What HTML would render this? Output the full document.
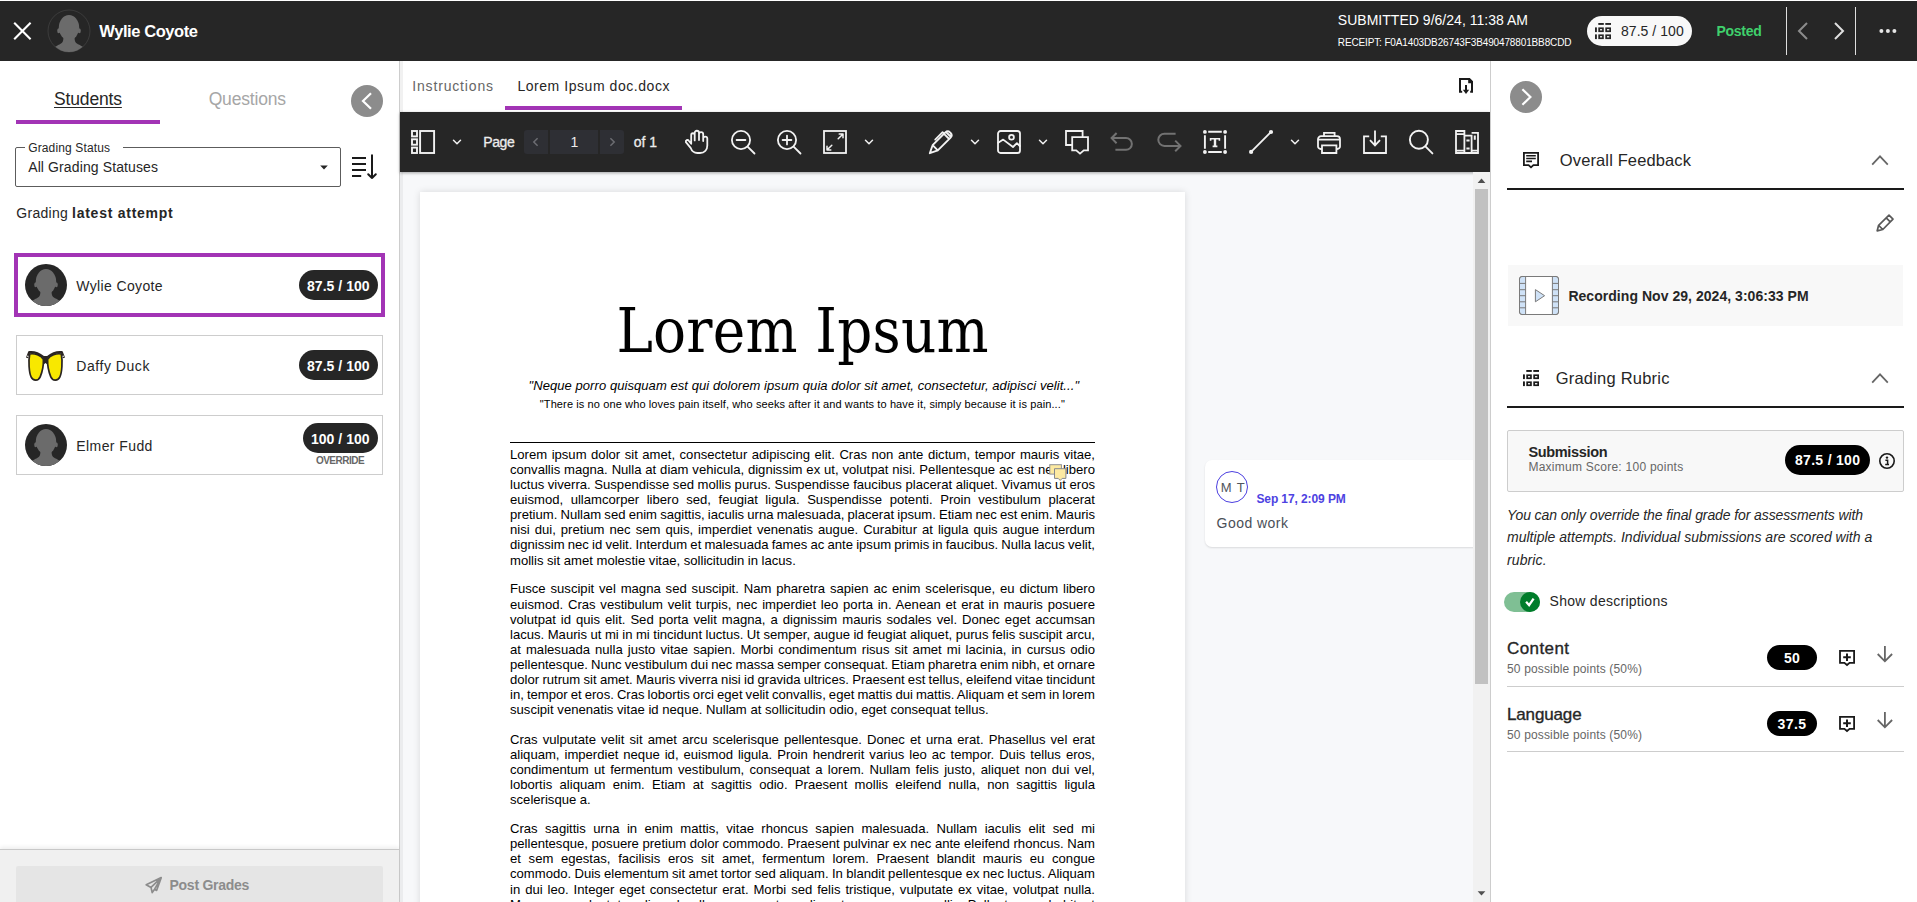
<!DOCTYPE html>
<html lang="en"><head><meta charset="utf-8"><title>Grading - Lorem Ipsum doc.docx</title>
<style>
html,body{margin:0;padding:0;}
body{width:1917px;height:902px;overflow:hidden;position:relative;background:#fff;font-family:"Liberation Sans","DejaVu Sans",sans-serif;}
.t{position:absolute;white-space:nowrap;margin:0;padding:0;}
h1.t{font-weight:400;}
svg{overflow:visible;display:block;}
.para{margin:0;padding:0;}
</style></head>
<body>
<svg width="0" height="0" style="position:absolute"><defs><symbol id="sil" viewBox="0 0 42 42"><clipPath id="silc"><circle cx="21" cy="21" r="21"/></clipPath><g clip-path="url(#silc)"><ellipse cx="21" cy="17.6" rx="10.2" ry="12.6"/><ellipse cx="10.7" cy="20.8" rx="1.5" ry="2.5"/><ellipse cx="31.3" cy="20.8" rx="1.5" ry="2.5"/>
<path d="M15.4 27 L26.6 27 C26.6 31 27 32.6 30 34.2 C33.4 35.8 37 37.4 39 42 L3 42 C5 37.4 8.6 35.8 12 34.2 C15 32.6 15.4 31 15.4 27 Z"/></g></symbol></defs></svg>
<aside id="students">
<div style="position:absolute;left:0px;top:61px;width:399px;height:841px;background:#fff;border-right:1px solid #cdcdcd;"></div>
<span class="t" id="t0" style="left:54.0px;top:90.8px;font:normal 400 17.5px/1 'Liberation Sans', 'DejaVu Sans', sans-serif;color:#262626;letter-spacing:-0.154px;text-decoration:underline;text-decoration-thickness:1px;text-underline-offset:2px;">Students</span>
<div style="position:absolute;left:16px;top:120px;width:144px;height:4px;background:#a234b5;"></div>
<span class="t" id="t1" style="left:208.7px;top:90.8px;font:normal 400 17.5px/1 'Liberation Sans', 'DejaVu Sans', sans-serif;color:#a6a6a6;letter-spacing:-0.187px;">Questions</span>
<svg style="position:absolute;left:351px;top:85px;" width="32" height="32" viewBox="0 0 32 32" fill="none"><circle cx="16" cy="16" r="16" fill="#8c8c8c"/>
<path d="M20 8.2 L12 16 L20 23.8" stroke="#fff" stroke-width="2.2"/></svg>
<div style="position:absolute;left:15px;top:147px;width:326px;height:40px;background:#fff;border:1px solid #5c5c5c;border-radius:2px;box-sizing:border-box;"></div>
<div style="position:absolute;left:25px;top:145px;width:98px;height:5px;background:#fff;"></div>
<span class="t" id="t2" style="left:28.2px;top:141.7px;font:normal 400 12px/1 'Liberation Sans', 'DejaVu Sans', sans-serif;color:#262626;letter-spacing:0.135px;">Grading Status</span>
<span class="t" id="t3" style="left:28.2px;top:159.8px;font:normal 400 14px/1 'Liberation Sans', 'DejaVu Sans', sans-serif;color:#262626;letter-spacing:0.114px;">All Grading Statuses</span>
<svg style="position:absolute;left:319px;top:164px;" width="10" height="7" viewBox="0 0 10 7" fill="none">
<path d="M1.2 1.4 L8.8 1.4 L5 5.6 Z" fill="#262626"/></svg>
<svg style="position:absolute;left:350px;top:154px;" width="28" height="27" viewBox="0 0 28 27" fill="none">
<path d="M2 4 H16 M2 10 H16 M2 16 H16 M2 22 H11.2" stroke="#1a1a1a" stroke-width="2"/>
<path d="M22 1.2 V24 M18.2 20.2 L22 24 L25.8 20.2" stroke="#1a1a1a" stroke-width="2" stroke-linecap="round" stroke-linejoin="round"/></svg>
<span class="t" id="t4" style="left:16.3px;top:205.7px;font:normal 400 14px/1 'Liberation Sans', 'DejaVu Sans', sans-serif;color:#262626;letter-spacing:0.281px;">Grading</span>
<span class="t" id="t5" style="left:72.0px;top:205.7px;font:normal 700 14px/1 'Liberation Sans', 'DejaVu Sans', sans-serif;color:#262626;letter-spacing:0.751px;">latest attempt</span>
<div style="position:absolute;left:14px;top:253px;width:371px;height:64px;background:#fff;border:4px solid #a234b5;box-sizing:border-box;"></div>
<div style="position:absolute;left:16px;top:335px;width:367px;height:60px;background:#fff;border:1px solid #cdcdcd;box-sizing:border-box;"></div>
<div style="position:absolute;left:16px;top:415px;width:367px;height:60px;background:#fff;border:1px solid #cdcdcd;box-sizing:border-box;"></div>
<svg style="position:absolute;left:25px;top:264px;" width="42" height="42" viewBox="0 0 42 42" fill="none"><circle cx="21" cy="21" r="21" fill="#262626"/><use href="#sil" width="42" height="42" fill="#6b6b6b"/></svg>
<svg style="position:absolute;left:25px;top:424px;" width="42" height="42" viewBox="0 0 42 42" fill="none"><circle cx="21" cy="21" r="21" fill="#262626"/><use href="#sil" width="42" height="42" fill="#6b6b6b"/></svg>
<svg style="position:absolute;left:26.3px;top:351px;" width="39" height="31" viewBox="0 0 39 31" fill="none">
<path d="M17 5.6 H22 L21.4 13.4 L19.5 12 L17.6 13.4 Z" fill="#2a2522"/>
<path d="M3.7 3 C8.5 2 15 4.4 17.4 8.2 C17.6 14 16.2 21 14.2 25.8 C12.4 30 7.2 30.2 5.2 26.2 C3 21.6 2.3 10 3.7 3 Z" fill="#f8e800" stroke="#2a2522" stroke-width="1.7"/>
<path d="M3.7 3 C8.5 2 15 4.4 17.4 8.2 C17.6 14 16.2 21 14.2 25.8 C12.4 30 7.2 30.2 5.2 26.2 C3 21.6 2.3 10 3.7 3 Z" fill="#f8e800" stroke="#2a2522" stroke-width="1.7" transform="translate(39 0) scale(-1 1)"/>
<path d="M1 6.8 L3.2 1.2 C9 0.4 14.4 3.6 17.6 6.2 H21.4 C24.6 3.6 30 0.4 35.8 1.2 L38 6.8" stroke="#2a2522" stroke-width="2.2" fill="none" stroke-linejoin="round"/><circle cx="1.8" cy="5.2" r="0.8" fill="#e6e6e6"/><circle cx="37.2" cy="5.2" r="0.8" fill="#e6e6e6"/></svg>
<span class="t" id="t6" style="left:76.3px;top:279.1px;font:normal 400 14px/1 'Liberation Sans', 'DejaVu Sans', sans-serif;color:#262626;letter-spacing:0.358px;">Wylie Coyote</span>
<span class="t" id="t7" style="left:76.3px;top:359.1px;font:normal 400 14px/1 'Liberation Sans', 'DejaVu Sans', sans-serif;color:#262626;letter-spacing:0.542px;">Daffy Duck</span>
<span class="t" id="t8" style="left:76.3px;top:439.1px;font:normal 400 14px/1 'Liberation Sans', 'DejaVu Sans', sans-serif;color:#262626;letter-spacing:0.416px;">Elmer Fudd</span>
<div style="position:absolute;left:299px;top:270px;width:79px;height:30px;background:#262626;border-radius:15.0px;"></div>
<span class="t" id="t9" style="left:307.0px;top:278.5px;font:normal 700 14px/1 'Liberation Sans', 'DejaVu Sans', sans-serif;color:#fff;letter-spacing:0.035px;">87.5 / 100</span>
<div style="position:absolute;left:299px;top:350px;width:79px;height:30px;background:#262626;border-radius:15.0px;"></div>
<span class="t" id="t10" style="left:307.0px;top:358.5px;font:normal 700 14px/1 'Liberation Sans', 'DejaVu Sans', sans-serif;color:#fff;letter-spacing:0.035px;">87.5 / 100</span>
<div style="position:absolute;left:303px;top:423px;width:75px;height:30px;background:#262626;border-radius:15.0px;"></div>
<span class="t" id="t11" style="left:311.0px;top:431.5px;font:normal 700 14px/1 'Liberation Sans', 'DejaVu Sans', sans-serif;color:#fff;letter-spacing:0.026px;">100 / 100</span>
<span class="t" id="t12" style="left:315.9px;top:455.7px;font:normal 700 10px/1 'Liberation Sans', 'DejaVu Sans', sans-serif;color:#666;letter-spacing:-0.491px;">OVERRIDE</span>
<div style="position:absolute;left:0px;top:849px;width:399px;height:53px;background:#f0f0f0;border-top:1px solid #c8c8c8;box-sizing:border-box;box-shadow:0 -2px 4px rgba(0,0,0,.07);"></div>
<div style="position:absolute;left:16px;top:866px;width:367px;height:40px;background:#e5e5e5;border-radius:2px;"></div>
<svg style="position:absolute;left:144px;top:875px;" width="20" height="20" viewBox="0 0 20 20" fill="none">
<path d="M17.2 2.6 L2.2 9.8 L7 12.4 L8.2 17.6 L10.6 14.2 L12.6 15.4 Z M17.2 2.6 L7 12.4 M17.2 2.6 L10.6 14.2" stroke="#8c8c8c" stroke-width="1.7" stroke-linejoin="round"/></svg>
<span class="t" id="t13" style="left:169.5px;top:878.1px;font:normal 700 14px/1 'Liberation Sans', 'DejaVu Sans', sans-serif;color:#8c8c8c;letter-spacing:-0.258px;">Post Grades</span></aside>
<main id="viewer">
<div style="position:absolute;left:400px;top:61px;width:1090px;height:51px;background:#fff;"></div>
<div style="position:absolute;left:400px;top:61px;width:3px;height:51px;background:#f1f1f1;"></div>
<span class="t" id="t14" style="left:412.2px;top:79.1px;font:normal 400 14px/1 'Liberation Sans', 'DejaVu Sans', sans-serif;color:#666;letter-spacing:0.846px;">Instructions</span>
<span class="t" id="t15" style="left:517.4px;top:79.1px;font:normal 400 14px/1 'Liberation Sans', 'DejaVu Sans', sans-serif;color:#262626;letter-spacing:0.551px;">Lorem Ipsum doc.docx</span>
<div style="position:absolute;left:505px;top:106px;width:177px;height:4px;background:#a234b5;"></div>
<svg style="position:absolute;left:1456px;top:75px;" width="20" height="22" viewBox="0 0 20 22" fill="none">
<path d="M6.2 16.8 H4 V4 H13.4 L16 6.6 V16.8 H14.2" stroke="#1a1a1a" stroke-width="2" stroke-linejoin="miter"/>
<path d="M12.2 3.4 H13.6 L16.6 6.4 V8.2 H12.2 Z" fill="#1a1a1a"/>
<path d="M10 10 V16" stroke="#1a1a1a" stroke-width="2"/>
<path d="M6.8 14.8 H13.2 L10 19 Z" fill="#1a1a1a"/></svg>
<div style="position:absolute;left:400px;top:172px;width:1073px;height:730px;background:#f7f8fa;"></div>
<div style="position:absolute;left:400px;top:172px;width:3px;height:730px;background:#ebecee;"></div>
<div style="position:absolute;left:420px;top:192px;width:765px;height:720px;background:#fff;box-shadow:0 0 7px rgba(0,0,0,.13);"></div>
<div style="position:absolute;left:400px;top:112px;width:1090px;height:60px;background:#262626;box-shadow:0 1px 3px rgba(0,0,0,.35);"></div>
<svg style="position:absolute;left:411px;top:130px;" width="24" height="24" viewBox="0 0 24 24" fill="none"><g stroke="#f2f2f2" stroke-width="1.9"><rect x="1" y="1" width="5" height="5.4"/><rect x="1" y="9.3" width="5" height="5.4"/><rect x="1" y="17.6" width="5" height="5.4"/><rect x="9.1" y="1" width="14" height="22"/></g></svg>
<svg style="position:absolute;left:451.2px;top:137.2px;" width="12" height="10" viewBox="0 0 12 10" fill="none">
<path d="M2.5 3.3 L6 6.8 L9.5 3.3" stroke="#f2f2f2" stroke-width="1.5" stroke-linecap="round" stroke-linejoin="round"/></svg>
<span class="t" id="t16" style="left:483.3px;top:134.6px;font:normal 400 14px/1 'Liberation Sans', 'DejaVu Sans', sans-serif;color:#ececec;letter-spacing:-0.434px;-webkit-text-stroke:0.3px #ececec;">Page</span>
<div style="position:absolute;left:524px;top:130px;width:24px;height:24px;background:#2e2f34;border-radius:3px 0 0 3px;"></div>
<div style="position:absolute;left:549.6px;top:130px;width:48.4px;height:24px;background:#2e2f34;"></div>
<div style="position:absolute;left:600px;top:130px;width:24px;height:24px;background:#2e2f34;border-radius:0 3px 3px 0;"></div>
<svg style="position:absolute;left:530px;top:136px;" width="12" height="12" viewBox="0 0 12 12" fill="none">
<path d="M7.6 2.2 L3.8 6 L7.6 9.8" stroke="#6c6d72" stroke-width="1.5"/></svg>
<svg style="position:absolute;left:606px;top:136px;" width="12" height="12" viewBox="0 0 12 12" fill="none">
<path d="M4.4 2.2 L8.2 6 L4.4 9.8" stroke="#6c6d72" stroke-width="1.5"/></svg>
<span class="t" id="t17" style="left:570.6px;top:134.6px;font:normal 400 14px/1 'Liberation Sans', 'DejaVu Sans', sans-serif;color:#ececec;letter-spacing:-1.397px;">1</span>
<span class="t" id="t18" style="left:633.8px;top:134.6px;font:normal 400 14px/1 'Liberation Sans', 'DejaVu Sans', sans-serif;color:#ececec;letter-spacing:-0.053px;-webkit-text-stroke:0.3px #ececec;">of 1</span>
<svg style="position:absolute;left:685px;top:130px;" width="24" height="24" viewBox="0 0 24 24" fill="none"><g stroke="#f2f2f2" stroke-width="1.8" stroke-linecap="round" stroke-linejoin="round">
<path d="M6.2 13.4 V5 a1.75 1.75 0 0 1 3.5 0 V10.4 M9.7 10 V2.9 a2.15 2.15 0 0 1 4.3 0 V10 M14 10 V4.2 a2.1 2.1 0 0 1 4.2 0 V11 M18.2 11 V8.6 a2.05 2.05 0 0 1 4.1 0 V15.5 c0 4.6 -2.8 7.5 -7.3 7.5 h-2.6 c-3.6 0 -5.6 -1.8 -6.8 -5.2 L0.9 12.2 c-.6 -1.9 1.8 -3 2.9 -1.5 L6.2 13.8"/></g></svg>
<svg style="position:absolute;left:731px;top:130px;" width="24" height="24" viewBox="0 0 24 24" fill="none"><g stroke="#f2f2f2" stroke-width="1.8" stroke-linecap="round" stroke-linejoin="round"><circle cx="10" cy="10" r="9.1"/>
<path d="M16.6 16.6 L23.5 23.5 M5.6 10 H14.4"/></g></svg>
<svg style="position:absolute;left:777px;top:130px;" width="24" height="24" viewBox="0 0 24 24" fill="none"><g stroke="#f2f2f2" stroke-width="1.8" stroke-linecap="round" stroke-linejoin="round"><circle cx="10" cy="10" r="9.1"/>
<path d="M16.6 16.6 L23.5 23.5 M5.6 10 H14.4 M10 5.6 V14.4"/></g></svg>
<svg style="position:absolute;left:823px;top:130px;" width="24" height="24" viewBox="0 0 24 24" fill="none"><g stroke="#f2f2f2" stroke-width="1.8" stroke-linecap="round" stroke-linejoin="round"><rect x="1" y="1" width="22" height="22" stroke-linejoin="miter"/>
<path d="M15.2 8.8 L19.8 4.2 M16.2 4 H20 V7.8 M8.8 15.2 L4.2 19.8 M4 16.2 V20 H7.8" stroke-width="1.5"/></g></svg>
<svg style="position:absolute;left:863px;top:137.2px;" width="12" height="10" viewBox="0 0 12 10" fill="none">
<path d="M2.5 3.3 L6 6.8 L9.5 3.3" stroke="#f2f2f2" stroke-width="1.5" stroke-linecap="round" stroke-linejoin="round"/></svg>
<svg style="position:absolute;left:929px;top:130px;" width="24" height="24" viewBox="0 0 24 24" fill="none"><g stroke="#f2f2f2" stroke-width="1.8" stroke-linecap="round" stroke-linejoin="round">
<path d="M0.8 23.2 L3.6 15.2 L8.8 20.4 Z M3.6 15.2 L16.4 2.4 a3.3 3.3 0 0 1 4.6 0 L21.6 3 a3.3 3.3 0 0 1 0 4.6 L8.8 20.4 M15 3.8 L20.2 9 M17 2 L22 7" stroke-width="1.9"/>
<path d="M6.2 9.6 L13.6 2.2 L15.2 3.6" stroke-width="1.8"/></g></svg>
<svg style="position:absolute;left:969px;top:137.2px;" width="12" height="10" viewBox="0 0 12 10" fill="none">
<path d="M2.5 3.3 L6 6.8 L9.5 3.3" stroke="#f2f2f2" stroke-width="1.5" stroke-linecap="round" stroke-linejoin="round"/></svg>
<svg style="position:absolute;left:997px;top:130px;" width="24" height="24" viewBox="0 0 24 24" fill="none"><g stroke="#f2f2f2" stroke-width="1.8" stroke-linecap="round" stroke-linejoin="round"><rect x="1" y="1" width="22" height="22" rx="2.6"/><circle cx="14.5" cy="7.3" r="2.4"/>
<path d="M1.2 12.8 L6.2 9.6 L16 17 L19.9 13.2 L22.8 16"/></g></svg>
<svg style="position:absolute;left:1037px;top:137.2px;" width="12" height="10" viewBox="0 0 12 10" fill="none">
<path d="M2.5 3.3 L6 6.8 L9.5 3.3" stroke="#f2f2f2" stroke-width="1.5" stroke-linecap="round" stroke-linejoin="round"/></svg>
<svg style="position:absolute;left:1065px;top:130px;" width="24" height="24" viewBox="0 0 24 24" fill="none"><g stroke="#f2f2f2" stroke-width="1.8" stroke-linecap="round" stroke-linejoin="round">
<path d="M6.6 15 H1 V1 H17.6 V6.6" stroke-linejoin="miter"/>
<path d="M7.2 7.2 H23 V20.4 H18.8 L15 23.6 L11.2 20.4 H7.2 Z" stroke-linejoin="miter"/></g></svg>
<svg style="position:absolute;left:1111px;top:130px;" width="24" height="24" viewBox="0 0 24 24" fill="none"><g stroke="#727272" stroke-width="2" stroke-linecap="round" stroke-linejoin="round">
<path d="M0.8 8.1 H15 a5.85 5.85 0 0 1 0 11.7 H4.4 M5.6 3 L0.6 8.1 L5.6 13.2" stroke-linecap="butt" stroke-linejoin="miter"/></g></svg>
<svg style="position:absolute;left:1157px;top:130px;" width="24" height="24" viewBox="0 0 24 24" fill="none"><g stroke="#727272" stroke-width="2" stroke-linecap="round" stroke-linejoin="round">
<path d="M18.6 3.7 H7.4 a6.1 6.1 0 0 0 0 12.2 H23.2 M18.2 10.6 L23.5 15.9 L18.2 21.2" stroke-linecap="butt" stroke-linejoin="miter"/></g></svg>
<svg style="position:absolute;left:1203px;top:130px;" width="24" height="24" viewBox="0 0 24 24" fill="none">
<path d="M1.9 5.2 V18.8 M22.1 5.2 V18.8 M5.2 1.8 H18.8 M5.2 22 H18.8" stroke="#f2f2f2" stroke-width="1.9"/><g fill="#f2f2f2"><circle cx="1.9" cy="1.9" r="1.9"/><circle cx="22.1" cy="1.9" r="1.9"/><circle cx="1.9" cy="22" r="1.9"/><circle cx="22.1" cy="22" r="1.9"/></g>
<path d="M7.6 10.8 V8.8 H16.4 V10.8 M9.6 16.4 H14.4" stroke="#f2f2f2" stroke-width="1.6"/>
<path d="M12 8.8 V16.4" stroke="#f2f2f2" stroke-width="2.4"/></svg>
<svg style="position:absolute;left:1249px;top:130px;" width="24" height="24" viewBox="0 0 24 24" fill="none">
<path d="M2.6 21.4 L21.6 2.4" stroke="#f2f2f2" stroke-width="1.8"/><circle cx="2.1" cy="21.9" r="2.1" fill="#f2f2f2"/><circle cx="22" cy="2" r="2.1" fill="#f2f2f2"/></svg>
<svg style="position:absolute;left:1289px;top:137.2px;" width="12" height="10" viewBox="0 0 12 10" fill="none">
<path d="M2.5 3.3 L6 6.8 L9.5 3.3" stroke="#f2f2f2" stroke-width="1.5" stroke-linecap="round" stroke-linejoin="round"/></svg>
<svg style="position:absolute;left:1317px;top:130px;" width="24" height="24" viewBox="0 0 24 24" fill="none"><g stroke="#f2f2f2" stroke-width="1.8" stroke-linecap="round" stroke-linejoin="round">
<path d="M7 6 V2.8 H17.6 V6 M5 19 H3.6 a2.6 2.6 0 0 1 -2.6 -2.6 V9.2 a3 3 0 0 1 3 -3 H20 a3 3 0 0 1 3 3 V16.4 a2.6 2.6 0 0 1 -2.6 2.6 H19.6 M1.4 9.6 H22.6 M5 15.4 H19.4 V23 H5 Z" stroke-linejoin="miter"/></g></svg>
<svg style="position:absolute;left:1363px;top:130px;" width="24" height="24" viewBox="0 0 24 24" fill="none"><g stroke="#f2f2f2" stroke-width="1.8" stroke-linecap="round" stroke-linejoin="round">
<path d="M6.2 6.4 H1 V23 H23 V6.4 H17.8 M12 0.4 V15.2 M7 10.2 L12 15.4 L17 10.2" stroke-linejoin="miter" stroke-linecap="butt"/></g></svg>
<svg style="position:absolute;left:1409px;top:130px;" width="24" height="24" viewBox="0 0 24 24" fill="none"><g stroke="#f2f2f2" stroke-width="1.9" stroke-linecap="round" stroke-linejoin="round"><circle cx="9.9" cy="9.8" r="9"/>
<path d="M16.4 16.4 L23.4 23.4"/></g></svg>
<svg style="position:absolute;left:1455px;top:130px;" width="24" height="24" viewBox="0 0 24 24" fill="none"><g stroke="#f2f2f2" stroke-width="1.8" stroke-linecap="round" stroke-linejoin="round">
<path d="M1 1 H9.4 V23 H1 Z M1 4.1 H9.4 M1 20.6 H9.4 M9.4 5.6 H16.6 V23 H9.4 M16.6 2.8 H23 V23 H16.6 M16.6 20.6 H23" stroke-linejoin="miter" stroke-linecap="butt"/>
<path d="M11.4 10.4 H14.6 M11.4 18.4 H14.6 M19.8 5.6 V9.8" stroke-linecap="butt" stroke-width="2"/></g></svg>
<h1 class="t" id="t19" style="left:616.4px;top:299.8px;font:normal 400 61px/1 'DejaVu Serif Condensed', 'Liberation Serif', serif;color:#000;letter-spacing:0.210px;">Lorem Ipsum</h1>
<span class="t" id="t20" style="left:528.5px;top:379.0px;font:italic 400 13px/1 'Liberation Sans', 'DejaVu Sans', sans-serif;color:#000;letter-spacing:0.069px;">&quot;Neque porro quisquam est qui dolorem ipsum quia dolor sit amet, consectetur, adipisci velit...&quot;</span>
<span class="t" id="t21" style="left:539.8px;top:399.0px;font:normal 400 11px/1 'Liberation Sans', 'DejaVu Sans', sans-serif;color:#000;letter-spacing:0.112px;">&quot;There is no one who loves pain itself, who seeks after it and wants to have it, simply because it is pain...&quot;</span>
<div style="position:absolute;left:510px;top:442px;width:585px;height:1px;background:#000;"></div>
<p class="para">
<span class="t" id="t22" style="left:510.0px;top:447.8px;font:normal 400 13.1px/1 'Liberation Sans', 'DejaVu Sans', sans-serif;color:#000;word-spacing:0.875px;">Lorem ipsum dolor sit amet, consectetur adipiscing elit. Cras non ante dictum, tempor mauris vitae,</span>
<span class="t" id="t23" style="left:510.0px;top:462.9px;font:normal 400 13.1px/1 'Liberation Sans', 'DejaVu Sans', sans-serif;color:#000;word-spacing:0.231px;">convallis magna. Nulla at diam vehicula, dignissim ex ut, volutpat nisi. Pellentesque ac est nec libero</span>
<span class="t" id="t24" style="left:510.0px;top:478.0px;font:normal 400 13.1px/1 'Liberation Sans', 'DejaVu Sans', sans-serif;color:#000;word-spacing:-0.053px;">luctus viverra. Suspendisse sed mollis purus. Suspendisse faucibus placerat aliquet. Vivamus ut eros</span>
<span class="t" id="t25" style="left:510.0px;top:493.1px;font:normal 400 13.1px/1 'Liberation Sans', 'DejaVu Sans', sans-serif;color:#000;word-spacing:3.913px;">euismod, ullamcorper libero sed, feugiat ligula. Suspendisse potenti. Proin vestibulum placerat</span>
<span class="t" id="t26" style="left:510.0px;top:508.2px;font:normal 400 13.1px/1 'Liberation Sans', 'DejaVu Sans', sans-serif;color:#000;word-spacing:-0.475px;">pretium. Nullam sed enim sagittis, iaculis urna malesuada, placerat ipsum. Etiam nec est enim. Mauris</span>
<span class="t" id="t27" style="left:510.0px;top:523.3px;font:normal 400 13.1px/1 'Liberation Sans', 'DejaVu Sans', sans-serif;color:#000;word-spacing:1.391px;">nisi dui, pretium nec sem quis, imperdiet venenatis augue. Curabitur at ligula quis augue interdum</span>
<span class="t" id="t28" style="left:510.0px;top:538.4px;font:normal 400 13.1px/1 'Liberation Sans', 'DejaVu Sans', sans-serif;color:#000;word-spacing:-0.462px;">dignissim nec id velit. Interdum et malesuada fames ac ante ipsum primis in faucibus. Nulla lacus velit,</span>
<span class="t" id="t29" style="left:510.0px;top:553.5px;font:normal 400 13.1px/1 'Liberation Sans', 'DejaVu Sans', sans-serif;color:#000;word-spacing:-0.029px;">mollis sit amet molestie vitae, sollicitudin in lacus.</span></p>
<p class="para">
<span class="t" id="t30" style="left:510.0px;top:582.4px;font:normal 400 13.1px/1 'Liberation Sans', 'DejaVu Sans', sans-serif;color:#000;word-spacing:1.238px;">Fusce suscipit vel magna sed suscipit. Nam pharetra sapien ac enim scelerisque, eu dictum libero</span>
<span class="t" id="t31" style="left:510.0px;top:597.5px;font:normal 400 13.1px/1 'Liberation Sans', 'DejaVu Sans', sans-serif;color:#000;word-spacing:1.154px;">euismod. Cras vestibulum velit turpis, nec imperdiet leo porta in. Aenean et erat in mauris posuere</span>
<span class="t" id="t32" style="left:510.0px;top:612.6px;font:normal 400 13.1px/1 'Liberation Sans', 'DejaVu Sans', sans-serif;color:#000;word-spacing:1.348px;">volutpat id quis elit. Sed porta velit magna, a dignissim mauris sodales vel. Donec eget accumsan</span>
<span class="t" id="t33" style="left:510.0px;top:627.7px;font:normal 400 13.1px/1 'Liberation Sans', 'DejaVu Sans', sans-serif;color:#000;word-spacing:-0.136px;">lacus. Mauris ut mi in mi tincidunt luctus. Ut semper, augue id feugiat aliquet, purus felis suscipit arcu,</span>
<span class="t" id="t34" style="left:510.0px;top:642.8px;font:normal 400 13.1px/1 'Liberation Sans', 'DejaVu Sans', sans-serif;color:#000;word-spacing:1.398px;">at malesuada nulla justo vitae sapien. Morbi condimentum risus sit amet mi lacinia, in cursus odio</span>
<span class="t" id="t35" style="left:510.0px;top:657.9px;font:normal 400 13.1px/1 'Liberation Sans', 'DejaVu Sans', sans-serif;color:#000;word-spacing:-0.462px;">pellentesque. Nunc vestibulum dui nec massa semper consequat. Etiam pharetra enim nibh, et ornare</span>
<span class="t" id="t36" style="left:510.0px;top:673.0px;font:normal 400 13.1px/1 'Liberation Sans', 'DejaVu Sans', sans-serif;color:#000;word-spacing:-0.347px;">dolor rutrum sit amet. Mauris viverra nisi id gravida ultrices. Praesent est tellus, eleifend vitae tincidunt</span>
<span class="t" id="t37" style="left:510.0px;top:688.1px;font:normal 400 13.1px/1 'Liberation Sans', 'DejaVu Sans', sans-serif;color:#000;word-spacing:-0.571px;">in, tempor et eros. Cras lobortis orci eget velit convallis, eget mattis dui mattis. Aliquam et sem in lorem</span>
<span class="t" id="t38" style="left:510.0px;top:703.2px;font:normal 400 13.1px/1 'Liberation Sans', 'DejaVu Sans', sans-serif;color:#000;word-spacing:0.044px;">suscipit venenatis vitae id neque. Nullam at sollicitudin odio, eget consequat tellus.</span></p>
<p class="para">
<span class="t" id="t39" style="left:510.0px;top:732.7px;font:normal 400 13.1px/1 'Liberation Sans', 'DejaVu Sans', sans-serif;color:#000;word-spacing:1.496px;">Cras vulputate velit sit amet arcu scelerisque pellentesque. Donec et urna erat. Phasellus vel erat</span>
<span class="t" id="t40" style="left:510.0px;top:747.8px;font:normal 400 13.1px/1 'Liberation Sans', 'DejaVu Sans', sans-serif;color:#000;word-spacing:1.340px;">aliquam, imperdiet neque id, euismod ligula. Proin hendrerit varius leo ac tempor. Duis tellus eros,</span>
<span class="t" id="t41" style="left:510.0px;top:762.9px;font:normal 400 13.1px/1 'Liberation Sans', 'DejaVu Sans', sans-serif;color:#000;word-spacing:1.668px;">condimentum ut fermentum vestibulum, consequat a lorem. Nullam felis justo, aliquet non dui vel,</span>
<span class="t" id="t42" style="left:510.0px;top:778.0px;font:normal 400 13.1px/1 'Liberation Sans', 'DejaVu Sans', sans-serif;color:#000;word-spacing:3.683px;">lobortis aliquam enim. Etiam at sagittis odio. Praesent mollis eleifend nulla, non sagittis ligula</span>
<span class="t" id="t43" style="left:510.0px;top:793.1px;font:normal 400 13.1px/1 'Liberation Sans', 'DejaVu Sans', sans-serif;color:#000;word-spacing:-0.097px;">scelerisque a.</span></p>
<p class="para">
<span class="t" id="t44" style="left:510.0px;top:822.1px;font:normal 400 13.1px/1 'Liberation Sans', 'DejaVu Sans', sans-serif;color:#000;word-spacing:3.787px;">Cras sagittis urna in enim mattis, vitae rhoncus sapien malesuada. Nullam iaculis elit sed mi</span>
<span class="t" id="t45" style="left:510.0px;top:837.2px;font:normal 400 13.1px/1 'Liberation Sans', 'DejaVu Sans', sans-serif;color:#000;word-spacing:-0.017px;">pellentesque, posuere pretium dolor commodo. Praesent pulvinar ex nec ante eleifend rhoncus. Nam</span>
<span class="t" id="t46" style="left:510.0px;top:852.3px;font:normal 400 13.1px/1 'Liberation Sans', 'DejaVu Sans', sans-serif;color:#000;word-spacing:4.022px;">et sem egestas, facilisis eros sit amet, fermentum lorem. Praesent blandit mauris eu congue</span>
<span class="t" id="t47" style="left:510.0px;top:867.4px;font:normal 400 13.1px/1 'Liberation Sans', 'DejaVu Sans', sans-serif;color:#000;word-spacing:-0.324px;">commodo. Duis elementum sit amet tortor sed aliquam. In blandit pellentesque ex nec luctus. Aliquam</span>
<span class="t" id="t48" style="left:510.0px;top:882.5px;font:normal 400 13.1px/1 'Liberation Sans', 'DejaVu Sans', sans-serif;color:#000;word-spacing:1.298px;">in dui leo. Integer eget consectetur erat. Morbi sed felis tristique, vulputate ex vitae, volutpat nulla.</span>
<span class="t" id="t49" style="left:510.0px;top:897.6px;font:normal 400 13.1px/1 'Liberation Sans', 'DejaVu Sans', sans-serif;color:#000;word-spacing:1.234px;">Maecenas vulputate odio vel nulla congue, at condimentum neque convallis. Pellentesque habitant</span>
<span class="t" id="t50" style="left:510.0px;top:912.7px;font:normal 400 13.1px/1 'Liberation Sans', 'DejaVu Sans', sans-serif;color:#000;word-spacing:-0.031px;">morbi tristique senectus et netus et malesuada fames ac turpis egestas.</span></p>
<svg style="position:absolute;left:1049px;top:464px;" width="18" height="17" viewBox="0 0 18 17" fill="none"><rect x="0.8" y="0.7" width="11.6" height="9.4" fill="#fce9a0" stroke="#8d9096" stroke-width="1"/>
<path d="M5.5 4.7 H16.9 V14.4 H13.2 L11.2 16.4 L9.2 14.4 H5.5 Z" fill="#fdeaa2" stroke="#85888f" stroke-width="1"/></svg>
<div style="position:absolute;left:1205px;top:460px;width:285px;height:87px;background:#fff;border-radius:7px;box-shadow:0 1px 2px rgba(0,0,0,.12);"></div>
<div style="position:absolute;left:1216px;top:471px;width:32px;height:32px;background:#fff;border:1px solid #4c3fe0;border-radius:50%;box-sizing:border-box;"></div>
<span class="t" id="t51" style="left:1220.8px;top:480.6px;font:normal 400 13px/1 'Liberation Sans', 'DejaVu Sans', sans-serif;color:#50555d;letter-spacing:0.822px;">M T</span>
<span class="t" id="t52" style="left:1256.4px;top:492.6px;font:normal 700 12px/1 'Liberation Sans', 'DejaVu Sans', sans-serif;color:#4d42e2;letter-spacing:-0.094px;">Sep 17, 2:09 PM</span>
<span class="t" id="t53" style="left:1216.6px;top:516.1px;font:normal 400 14px/1 'Liberation Sans', 'DejaVu Sans', sans-serif;color:#4a4f57;letter-spacing:0.462px;">Good work</span>
<div style="position:absolute;left:1473px;top:172px;width:17px;height:730px;background:#f1f1f1;"></div>
<div style="position:absolute;left:1475px;top:189px;width:13px;height:495px;background:#c1c1c1;"></div>
<svg style="position:absolute;left:1473px;top:172px;" width="17" height="17" viewBox="0 0 17 17" fill="none">
<path d="M4.6 11 L8.5 6.6 L12.4 11 Z" fill="#505050"/></svg>
<svg style="position:absolute;left:1473px;top:885px;" width="17" height="17" viewBox="0 0 17 17" fill="none">
<path d="M4.6 6.2 L8.5 10.6 L12.4 6.2 Z" fill="#505050"/></svg></main>
<aside id="grading">
<div style="position:absolute;left:1490px;top:61px;width:427px;height:841px;background:#fff;border-left:1px solid #cdcdcd;box-sizing:border-box;"></div>
<svg style="position:absolute;left:1510px;top:81px;" width="32" height="32" viewBox="0 0 32 32" fill="none"><circle cx="16" cy="16" r="16" fill="#8c8c8c"/>
<path d="M12.4 8.2 L20.4 16 L12.4 23.8" stroke="#fff" stroke-width="2.2"/></svg>
<svg style="position:absolute;left:1522px;top:151px;" width="18" height="18" viewBox="0 0 18 18" fill="none">
<path d="M1.9 1.9 H16.1 V14.1 H11.4 L9 16.3 L6.6 14.1 H1.9 Z" stroke="#1a1a1a" stroke-width="1.8" stroke-linejoin="miter"/>
<path d="M4.2 4.7 H13.8 M4.2 7.5 H13.8 M4.2 10.4 H10" stroke="#1a1a1a" stroke-width="1.6"/></svg>
<span class="t" id="t54" style="left:1559.8px;top:152.0px;font:normal 400 16.5px/1 'Liberation Sans', 'DejaVu Sans', sans-serif;color:#262626;letter-spacing:0.126px;">Overall Feedback</span>
<svg style="position:absolute;left:1870px;top:152px;" width="20" height="16" viewBox="0 0 20 16" fill="none">
<path d="M2.2 12.6 L10 4.4 L17.8 12.6" stroke="#666" stroke-width="1.8"/></svg>
<div style="position:absolute;left:1507px;top:188px;width:397px;height:2px;background:#1a1a1a;"></div>
<svg style="position:absolute;left:1875px;top:213px;" width="20" height="20" viewBox="0 0 20 20" fill="none">
<path d="M2.2 17.8 L3.6 12.3 L14 2.1 L18 6.1 L7.8 16.5 Z M3.6 12.3 L7.8 16.5 M11.2 4.9 L15.2 8.9" stroke="#595959" stroke-width="1.7" stroke-linejoin="round"/></svg>
<div style="position:absolute;left:1508px;top:265px;width:395px;height:61px;background:#f8f8f8;"></div>
<svg style="position:absolute;left:1519px;top:276px;" width="40" height="39" viewBox="0 0 40 39" fill="none"><rect x="0.5" y="0.5" width="39" height="38" rx="2.6" fill="#fff" stroke="#7a7a7a" stroke-width="1"/>
<path d="M1 3 a2 2 0 0 1 2 -2 H6.6 V38 H3 a2 2 0 0 1 -2 -2 Z" fill="#cfe2f7"/>
<path d="M39 3 a2 2 0 0 0 -2 -2 H33.4 V38 H37 a2 2 0 0 0 2 -2 Z" fill="#cfe2f7"/>
<path d="M6.6 0.5 V38.5 M33.4 0.5 V38.5 M0.5 7.4 H6.6 M0.5 13.7 H6.6 M0.5 19.7 H6.6 M0.5 25.8 H6.6 M0.5 31.8 H6.6 M33.4 7.4 H39.5 M33.4 13.7 H39.5 M33.4 19.7 H39.5 M33.4 25.8 H39.5 M33.4 31.8 H39.5" stroke="#7a7a7a" stroke-width="1"/><rect x="0.5" y="0.5" width="39" height="38" rx="2.6" stroke="#7a7a7a" stroke-width="1"/>
<path d="M16.4 13.6 L25.6 19.7 L16.4 25.8 Z" stroke="#7a7a7a" stroke-width="1" fill="#cfe2f7" stroke-linejoin="round"/></svg>
<span class="t" id="t55" style="left:1568.4px;top:288.9px;font:normal 700 14px/1 'Liberation Sans', 'DejaVu Sans', sans-serif;color:#262626;letter-spacing:0.040px;">Recording Nov 29, 2024, 3:06:33 PM</span>
<svg style="position:absolute;left:1523px;top:370px;" width="16" height="16" viewBox="0 0 16 16" fill="none"><g fill="#1a1a1a"><rect x="3.3" y="0" width="5.5" height="1.9"/><rect x="10.3" y="0" width="5.7" height="1.9"/><rect x="0" y="4.4" width="1.9" height="4.7"/><rect x="0" y="11.4" width="1.9" height="4.7"/></g><g stroke="#1a1a1a" stroke-width="1.7"><rect x="4.15" y="5.25" width="3.8" height="3"/><rect x="11.15" y="5.25" width="4" height="3"/><rect x="4.15" y="12.25" width="3.8" height="3"/><rect x="11.15" y="12.25" width="4" height="3"/></g></svg>
<span class="t" id="t56" style="left:1555.7px;top:370.2px;font:normal 400 16.5px/1 'Liberation Sans', 'DejaVu Sans', sans-serif;color:#262626;letter-spacing:0.210px;">Grading Rubric</span>
<svg style="position:absolute;left:1870px;top:370px;" width="20" height="16" viewBox="0 0 20 16" fill="none">
<path d="M2.2 12.6 L10 4.4 L17.8 12.6" stroke="#666" stroke-width="1.8"/></svg>
<div style="position:absolute;left:1507px;top:406px;width:397px;height:2px;background:#1a1a1a;"></div>
<div style="position:absolute;left:1507px;top:430px;width:397px;height:62px;background:#f8f8f8;border:1px solid #cdcdcd;box-sizing:border-box;border-radius:2px;"></div>
<span class="t" id="t57" style="left:1528.4px;top:444.7px;font:normal 700 14.5px/1 'Liberation Sans', 'DejaVu Sans', sans-serif;color:#262626;letter-spacing:-0.332px;">Submission</span>
<span class="t" id="t58" style="left:1528.4px;top:461.3px;font:normal 400 12px/1 'Liberation Sans', 'DejaVu Sans', sans-serif;color:#666;letter-spacing:0.253px;">Maximum Score: 100 points</span>
<div style="position:absolute;left:1785px;top:445px;width:85px;height:30px;background:#000;border-radius:15px;"></div>
<span class="t" id="t59" style="left:1795.0px;top:453.3px;font:normal 700 14px/1 'Liberation Sans', 'DejaVu Sans', sans-serif;color:#fff;letter-spacing:0.302px;">87.5 / 100</span>
<svg style="position:absolute;left:1878px;top:452px;" width="18" height="18" viewBox="0 0 18 18" fill="none"><circle cx="9" cy="9" r="7.2" stroke="#1a1a1a" stroke-width="1.6"/><circle cx="9" cy="5.6" r="1.2" fill="#1a1a1a"/>
<path d="M7.4 8.2 H9.6 V12.4 M7.2 12.6 H11" stroke="#1a1a1a" stroke-width="1.5"/></svg>
<span class="t" id="t60" style="left:1507.0px;top:507.9px;font:italic 400 14px/1 'Liberation Sans', 'DejaVu Sans', sans-serif;color:#262626;letter-spacing:-0.103px;">You can only override the final grade for assessments with</span>
<span class="t" id="t61" style="left:1507.0px;top:530.0px;font:italic 400 14px/1 'Liberation Sans', 'DejaVu Sans', sans-serif;color:#262626;letter-spacing:0.019px;">multiple attempts. Individual submissions are scored with a</span>
<span class="t" id="t62" style="left:1507.0px;top:552.7px;font:italic 400 14px/1 'Liberation Sans', 'DejaVu Sans', sans-serif;color:#262626;letter-spacing:0.116px;">rubric.</span>
<div style="position:absolute;left:1504px;top:592px;width:36px;height:20px;background:#7fbf94;border-radius:10px;"></div>
<svg style="position:absolute;left:1520px;top:592px;" width="20" height="20" viewBox="0 0 20 20" fill="none"><circle cx="10" cy="10" r="10" fill="#007d2b"/>
<path d="M6.1 9.8 L9.1 13.2 L13.6 6.6" stroke="#fff" stroke-width="2.3" stroke-linecap="butt" stroke-linejoin="miter"/></svg>
<span class="t" id="t63" style="left:1549.6px;top:594.0px;font:normal 400 14px/1 'Liberation Sans', 'DejaVu Sans', sans-serif;color:#262626;letter-spacing:0.267px;">Show descriptions</span>
<span class="t" id="t64" style="left:1507.0px;top:639.9px;font:normal 400 17px/1 'Liberation Sans', 'DejaVu Sans', sans-serif;color:#262626;letter-spacing:0.409px;-webkit-text-stroke:0.35px #262626;">Content</span>
<span class="t" id="t65" style="left:1507.0px;top:662.8px;font:normal 400 12px/1 'Liberation Sans', 'DejaVu Sans', sans-serif;color:#666;letter-spacing:0.156px;">50 possible points (50%)</span>
<div style="position:absolute;left:1767px;top:645px;width:50px;height:25px;background:#000;border-radius:12.5px;"></div>
<span class="t" id="t66" style="left:1784.1px;top:650.7px;font:normal 700 14px/1 'Liberation Sans', 'DejaVu Sans', sans-serif;color:#fff;letter-spacing:0.222px;">50</span>
<svg style="position:absolute;left:1838px;top:649px;" width="18" height="18" viewBox="0 0 18 18" fill="none">
<path d="M2 1.9 H16.1 V13.8 H11.6 L9 16 L6.4 13.8 H2 Z" stroke="#1a1a1a" stroke-width="1.8" stroke-linejoin="miter"/>
<path d="M9 4.4 V12 M5.2 8.2 H12.8" stroke="#1a1a1a" stroke-width="2"/></svg>
<svg style="position:absolute;left:1876px;top:645px;" width="18" height="18" viewBox="0 0 18 18" fill="none">
<path d="M8.9 0.9 V16.2 M1.7 9 L8.9 16.3 L16.1 9" stroke="#666" stroke-width="1.8"/></svg>
<div style="position:absolute;left:1507px;top:686px;width:397px;height:1px;background:#cdcdcd;"></div>
<span class="t" id="t67" style="left:1507.0px;top:705.6px;font:normal 400 17px/1 'Liberation Sans', 'DejaVu Sans', sans-serif;color:#262626;letter-spacing:-0.149px;-webkit-text-stroke:0.35px #262626;">Language</span>
<span class="t" id="t68" style="left:1507.0px;top:728.8px;font:normal 400 12px/1 'Liberation Sans', 'DejaVu Sans', sans-serif;color:#666;letter-spacing:0.156px;">50 possible points (50%)</span>
<div style="position:absolute;left:1767px;top:711px;width:50px;height:25px;background:#000;border-radius:12.5px;"></div>
<span class="t" id="t69" style="left:1777.6px;top:716.7px;font:normal 700 14px/1 'Liberation Sans', 'DejaVu Sans', sans-serif;color:#fff;letter-spacing:0.383px;">37.5</span>
<svg style="position:absolute;left:1838px;top:715px;" width="18" height="18" viewBox="0 0 18 18" fill="none">
<path d="M2 1.9 H16.1 V13.8 H11.6 L9 16 L6.4 13.8 H2 Z" stroke="#1a1a1a" stroke-width="1.8" stroke-linejoin="miter"/>
<path d="M9 4.4 V12 M5.2 8.2 H12.8" stroke="#1a1a1a" stroke-width="2"/></svg>
<svg style="position:absolute;left:1876px;top:711px;" width="18" height="18" viewBox="0 0 18 18" fill="none">
<path d="M8.9 0.9 V16.2 M1.7 9 L8.9 16.3 L16.1 9" stroke="#666" stroke-width="1.8"/></svg>
<div style="position:absolute;left:1507px;top:751px;width:397px;height:1px;background:#cdcdcd;"></div></aside>
<header id="topbar">
<div style="position:absolute;left:0px;top:1px;width:1917px;height:60px;background:#262626;"></div>
<svg style="position:absolute;left:10px;top:18px;" width="26" height="26" viewBox="0 0 26 26" fill="none">
<path d="M4.2 4.8 L20.6 21.2 M20.6 4.8 L4.2 21.2" stroke="#fff" stroke-width="2.1" stroke-linecap="butt"/></svg>
<svg style="position:absolute;left:47px;top:9px;" width="44" height="44" viewBox="0 0 44 44" fill="none"><circle cx="22" cy="22" r="21" fill="#262626" stroke="#454545" stroke-width="0.7"/><use href="#sil" x="1" y="1" width="42" height="42" fill="#6b6b6b"/></svg>
<span class="t" id="t70" style="left:99.3px;top:23.0px;font:normal 700 16.5px/1 'Liberation Sans', 'DejaVu Sans', sans-serif;color:#fff;letter-spacing:-0.419px;">Wylie Coyote</span>
<span class="t" id="t71" style="left:1337.8px;top:12.7px;font:normal 400 14px/1 'Liberation Sans', 'DejaVu Sans', sans-serif;color:#fff;letter-spacing:0.024px;">SUBMITTED 9/6/24, 11:38 AM</span>
<span class="t" id="t72" style="left:1337.8px;top:37.5px;font:normal 400 10px/1 'Liberation Sans', 'DejaVu Sans', sans-serif;color:#fff;letter-spacing:-0.134px;">RECEIPT: F0A1403DB26743F3B490478801BB8CDD</span>
<div style="position:absolute;left:1587px;top:16px;width:105px;height:30px;background:#f8f8f8;border-radius:15px;"></div>
<svg style="position:absolute;left:1595px;top:23px;" width="16" height="16" viewBox="0 0 16 16" fill="none"><g fill="#262626"><rect x="3.3" y="0" width="5.5" height="1.9"/><rect x="10.3" y="0" width="5.7" height="1.9"/><rect x="0" y="4.4" width="1.9" height="4.7"/><rect x="0" y="11.4" width="1.9" height="4.7"/></g><g stroke="#262626" stroke-width="1.7"><rect x="4.15" y="5.25" width="3.8" height="3"/><rect x="11.15" y="5.25" width="4" height="3"/><rect x="4.15" y="12.25" width="3.8" height="3"/><rect x="11.15" y="12.25" width="4" height="3"/></g></svg>
<span class="t" id="t73" style="left:1621.0px;top:24.1px;font:normal 400 14px/1 'Liberation Sans', 'DejaVu Sans', sans-serif;color:#262626;letter-spacing:0.047px;">87.5 / 100</span>
<span class="t" id="t74" style="left:1716.4px;top:24.1px;font:normal 700 14px/1 'Liberation Sans', 'DejaVu Sans', sans-serif;color:#3fd06c;letter-spacing:-0.258px;">Posted</span>
<div style="position:absolute;left:1786px;top:7px;width:1px;height:48px;background:#dedede;"></div>
<div style="position:absolute;left:1855px;top:7px;width:1px;height:48px;background:#dedede;"></div>
<svg style="position:absolute;left:1794px;top:19px;" width="18" height="24" viewBox="0 0 18 24" fill="none">
<path d="M13 4 L5 12 L13 20" stroke="#8c8c8c" stroke-width="2"/></svg>
<svg style="position:absolute;left:1830px;top:19px;" width="18" height="24" viewBox="0 0 18 24" fill="none">
<path d="M5 4 L13 12 L5 20" stroke="#e0e0e0" stroke-width="2"/></svg>
<svg style="position:absolute;left:1876px;top:27px;" width="24" height="8" viewBox="0 0 24 8" fill="none"><circle cx="5.4" cy="4" r="2" fill="#e6e6e6"/><circle cx="11.9" cy="4" r="2" fill="#e6e6e6"/><circle cx="18.4" cy="4" r="2" fill="#e6e6e6"/></svg></header>
</body></html>
